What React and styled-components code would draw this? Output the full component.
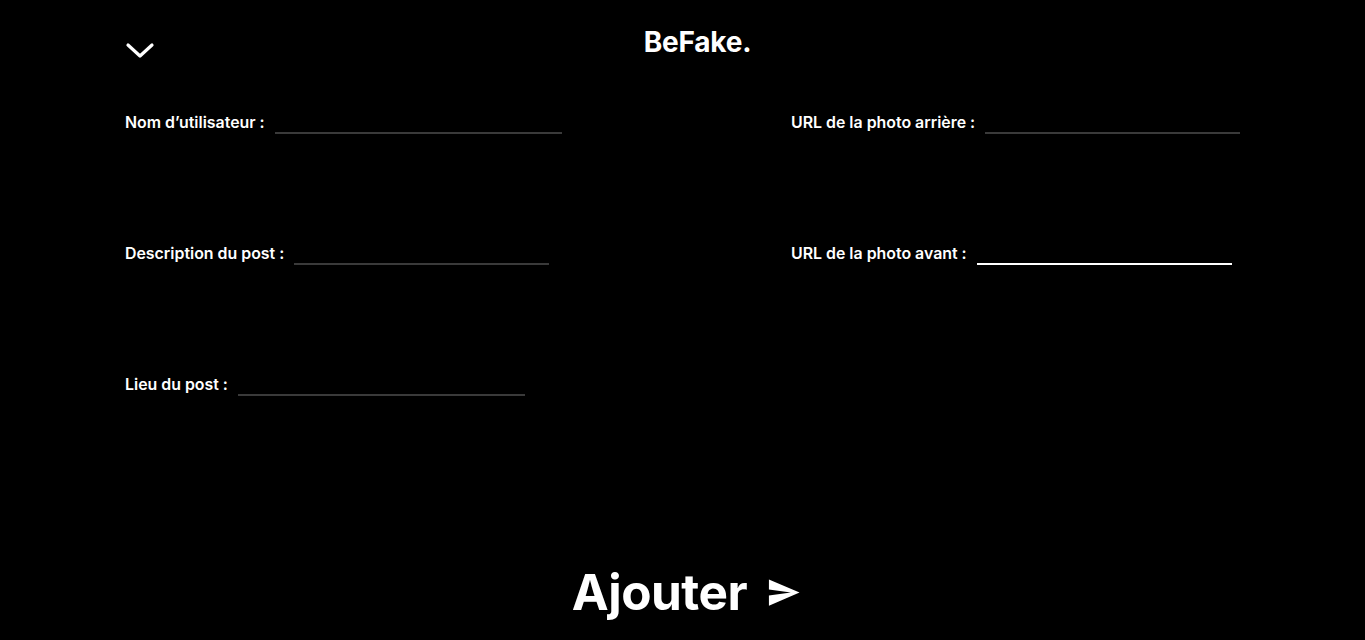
import React, { useState } from "react";
import styled, { createGlobalStyle } from "styled-components";

const Global = createGlobalStyle`
  html, body { margin: 0; padding: 0; background: #000; }
  body { font-family: Inter, "Noto Sans", sans-serif; color: #fff; }
  * { box-sizing: border-box; }
`;

const Page = styled.div`
  width: 1365px;
  height: 640px;
  background: #000;
  display: flex;
  flex-direction: column;
  padding: 0 125px;
  overflow: hidden;
`;

const Header = styled.header`
  display: flex;
  align-items: flex-start;
  height: 113px;
  padding-top: 24px;
`;

const BackButton = styled.button`
  background: none;
  border: none;
  padding: 0;
  margin-top: 18px;
  width: 30px;
  height: 18px;
  display: flex;
  cursor: pointer;
`;

const Title = styled.h1`
  flex: 1;
  margin: 0;
  text-align: center;
  font-size: 28px;
  font-weight: 700;
  line-height: 36px;
  letter-spacing: -0.2px;
`;

const Form = styled.form`
  display: grid;
  grid-template-columns: 666px 1fr;
  grid-auto-rows: 131px;
`;

const Field = styled.label`
  display: flex;
  align-items: flex-start;
  gap: 10px;
  font-size: 15.9px;
  font-weight: 600;
  line-height: 20px;
  white-space: nowrap;
`;

const Input = styled.input`
  width: ${(p) => p.$w}px;
  height: 20px;
  margin-top: 1px;
  background: transparent;
  border: none;
  border-bottom: 2px solid ${(p) => (p.$active ? "#fff" : "#3a3a3a")};
  color: #fff;
  font: inherit;
  outline: none;
  padding: 0;
`;

const Footer = styled.div`
  flex: 1;
  display: flex;
  justify-content: center;
  align-items: flex-end;
  padding-bottom: 18px;
`;

const SubmitButton = styled.button`
  display: flex;
  align-items: center;
  gap: 19px;
  background: none;
  border: none;
  color: #fff;
  font-family: Inter, "Noto Sans", sans-serif;
  font-size: 49.5px;
  font-weight: 700;
  letter-spacing: -0.5px;
  line-height: 60px;
  padding: 0;
  margin-left: 8px;
  cursor: pointer;
`;

const Chevron = () => (
  <svg width="30" height="18" viewBox="0 0 30 18" fill="none">
    <path d="M3 3 L15 14 L27 3" stroke="#fff" strokeWidth="3.2" strokeLinecap="round" strokeLinejoin="round" />
  </svg>
);

const SendIcon = () => (
  <svg width="35" height="35" viewBox="0 0 24 24" fill="#fff">
    <path d="M2.01 21L23 12 2.01 3 2 10l15 2-15 2z" />
  </svg>
);

const fields = [
  { label: "Nom d\u2019utilisateur :", w: 287 },
  { label: "URL de la photo arri\u00e8re :", w: 255 },
  { label: "Description du post :", w: 255 },
  { label: "URL de la photo avant :", w: 255, active: true },
  { label: "Lieu du post :", w: 287 },
];

export default function App() {
  const [values, setValues] = useState({});
  return (
    <>
      <Global />
      <Page>
        <Header>
          <BackButton aria-label="Retour">
            <Chevron />
          </BackButton>
          <Title>BeFake.</Title>
        </Header>
        <Form onSubmit={(e) => e.preventDefault()}>
          {fields.map((f) => (
            <Field key={f.label}>
              {f.label}
              <Input
                $w={f.w}
                $active={f.active}
                value={values[f.label] || ""}
                onChange={(e) => setValues({ ...values, [f.label]: e.target.value })}
              />
            </Field>
          ))}
        </Form>
        <Footer>
          <SubmitButton type="button">
            Ajouter
            <SendIcon />
          </SubmitButton>
        </Footer>
      </Page>
    </>
  );
}
